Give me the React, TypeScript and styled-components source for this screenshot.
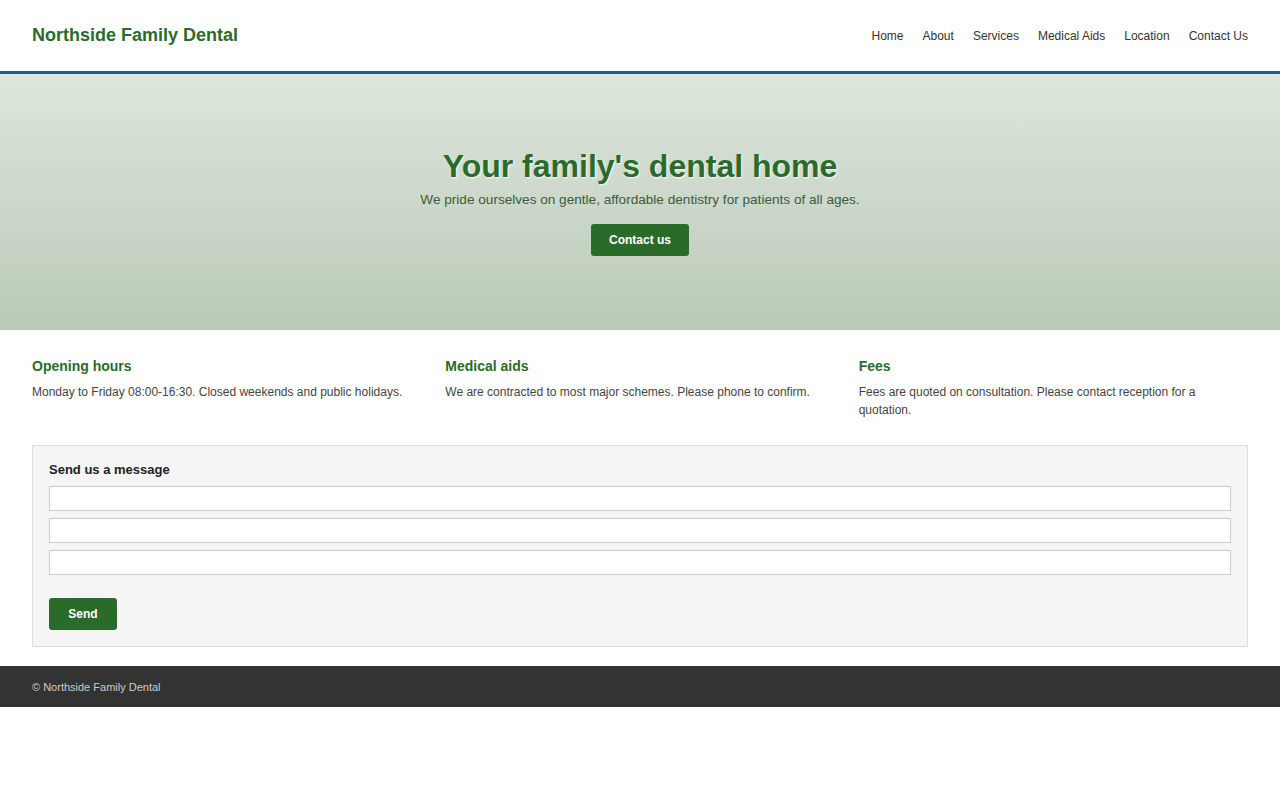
import styled, { createGlobalStyle } from "styled-components";

const GlobalStyle = createGlobalStyle`
  * {
    box-sizing: border-box;
  }

  body {
    margin: 0;
    font-family: "Liberation Sans", Arial, sans-serif;
    color: #333;
    background: #fff;
  }
`;

const navLinks = ["Home", "About", "Services", "Medical Aids", "Location", "Contact Us"];

const infoBlocks = [
  {
    title: "Opening hours",
    text: "Monday to Friday 08:00-16:30. Closed weekends and public holidays.",
  },
  {
    title: "Medical aids",
    text: "We are contracted to most major schemes. Please phone to confirm.",
  },
  {
    title: "Fees",
    text: "Fees are quoted on consultation. Please contact reception for a quotation.",
  },
];

const App = () => {
  return (
    <>
      <GlobalStyle />
      <Header>
        <Brand>Northside Family Dental</Brand>
        <Nav>
          {navLinks.map((link) => (
            <NavLink key={link} href="#">
              {link}
            </NavLink>
          ))}
        </Nav>
      </Header>

      <Hero>
        <HeroTitle>Your family's dental home</HeroTitle>
        <HeroText>We pride ourselves on gentle, affordable dentistry for patients of all ages.</HeroText>
        <GreenButton $width={98}>Contact us</GreenButton>
      </Hero>

      <Main>
        <InfoGrid>
          {infoBlocks.map((block) => (
            <InfoBlock key={block.title}>
              <h3>{block.title}</h3>
              <p>{block.text}</p>
            </InfoBlock>
          ))}
        </InfoGrid>

        <FormPanel>
          <FormTitle>Send us a message</FormTitle>
          <Fields>
            <Field type="text" />
            <Field type="email" />
            <Field type="text" />
          </Fields>
          <GreenButton $width={68}>Send</GreenButton>
        </FormPanel>
      </Main>

      <Footer>© Northside Family Dental</Footer>
    </>
  );
};

const Header = styled.header`
  display: flex;
  justify-content: space-between;
  align-items: center;
  height: 74px;
  padding: 0 32px;
  border-bottom: 3px solid #1c5f9f;
  background: #fff;
`;

const Brand = styled.div`
  font-size: 18px;
  font-weight: bold;
  color: #2a6b2a;
`;

const Nav = styled.nav`
  display: flex;
  gap: 19px;
`;

const NavLink = styled.a`
  font-size: 12px;
  color: #333;
  text-decoration: none;
`;

const Hero = styled.section`
  display: flex;
  flex-direction: column;
  align-items: center;
  height: 256px;
  padding-top: 73px;
  background: linear-gradient(to bottom, #dde6dc, #bbcab8);
  text-align: center;
`;

const HeroTitle = styled.h1`
  margin: 0;
  font-size: 32px;
  line-height: 38px;
  font-weight: bold;
  color: #2a6b2a;
  text-shadow: 1px 1px 2px rgba(255, 255, 255, 0.9);
`;

const HeroText = styled.p`
  margin: 6px 0 15px;
  font-size: 13.6px;
  line-height: 18px;
  color: #3e5a3e;
`;

const GreenButton = styled.button<{ $width: number }>`
  width: ${(props) => props.$width}px;
  height: 32px;
  padding: 0;
  border: none;
  border-radius: 3px;
  background: #2a6b2a;
  color: #fff;
  font-family: inherit;
  font-size: 12px;
  font-weight: bold;
  cursor: pointer;
`;

const Main = styled.main`
  padding: 26px 32px 19px;
`;

const InfoGrid = styled.div`
  display: grid;
  grid-template-columns: repeat(3, 1fr);
  gap: 24px;
  margin-bottom: 26px;
`;

const InfoBlock = styled.div`
  h3 {
    margin: 0 0 7px;
    font-size: 14px;
    line-height: 20px;
    color: #2a6b2a;
  }

  p {
    margin: 0;
    font-size: 12px;
    line-height: 18px;
    color: #444;
  }
`;

const FormPanel = styled.div`
  padding: 16px;
  border: 1px solid #ddd;
  background: #f5f5f5;
`;

const FormTitle = styled.h4`
  margin: 0 0 8px;
  font-size: 13px;
  line-height: 16px;
  color: #222;
`;

const Fields = styled.div`
  display: flex;
  flex-direction: column;
  gap: 7px;
  margin-bottom: 23px;
`;

const Field = styled.input`
  display: block;
  width: 100%;
  height: 25px;
  border: 1px solid #ccc;
  background: #fff;
  font-family: inherit;
  font-size: 12px;
`;

const Footer = styled.footer`
  height: 41px;
  padding: 0 32px;
  display: flex;
  align-items: center;
  background: #333;
  color: #ccc;
  font-size: 11px;
`;

export default App;
